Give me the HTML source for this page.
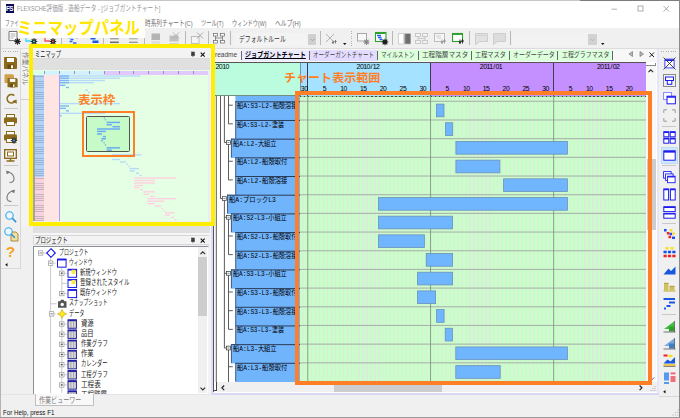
<!DOCTYPE html>
<html lang="ja"><head><meta charset="utf-8"><title>FLEXSCHE</title>
<style>
*{margin:0;padding:0;box-sizing:border-box}
html,body{width:680px;height:418px;overflow:hidden;background:#f0f0f0}
body{position:relative;font-family:"Liberation Sans","Noto Sans CJK JP",sans-serif;font-size:7.5px;color:#000;line-height:1}
.a{position:absolute}
.t{position:absolute;white-space:nowrap;line-height:1}
.g{font-family:"Liberation Mono","Noto Sans CJK JP",monospace}
svg{position:absolute;overflow:visible}
</style></head>
<body>
<div class="a" style="left:0px;top:0px;width:680px;height:28px;background:#fff;"></div>
<div class="a" style="left:0px;top:0px;width:580px;height:1px;background:#c6c6c6;"></div>
<div class="a" style="left:580px;top:0px;width:100px;height:1px;background:#7c7c7c;"></div>
<div class="a" style="left:0px;top:0px;width:1px;height:418px;background:#b4b4b4;"></div>
<div class="a" style="left:678.5px;top:0px;width:1.5px;height:418px;background:#8a8a8a;"></div>
<div class="a" style="left:0px;top:417.3px;width:680px;height:0.7px;background:#9a9a9a;"></div>
<div class="a" style="left:5.5px;top:4px;width:8px;height:8.5px;background:#0b0b5c;"></div>
<div class="t" style="left:6px;top:4.6px;font-size:8px;color:#fff;font-weight:bold;letter-spacing:-0.8px;transform-origin:0 0;transform:scaleX(0.78)">FS</div>
<div class="t" style="transform-origin:0 0;transform:scaleX(0.718);left:16.6px;top:5.1px;font-size:7.8px;color:#959595;">FLEXSCHE評価版 - 造船データ - [ジョブガントチャート]</div>
<svg style="left:605px;top:0" width="75" height="18" viewBox="0 0 75 18"><g fill="none" stroke="#9a9a9a" stroke-width="0.8"><path d="M6.5 9.2h5.5"/><rect x="33" y="6" width="5" height="5"/><path d="M58.5 6l5.5 5.5M64 6l-5.5 5.5"/></g></svg>
<div class="t" style="transform-origin:0 0;transform:scaleX(0.611);left:5px;top:19.9px;font-size:7.6px;color:#6c6c6c;">ファイル(F)</div>
<div class="t" style="transform-origin:0 0;transform:scaleX(0.748);left:145px;top:19.9px;font-size:7.6px;color:#6c6c6c;">時系列チャート(C)</div>
<div class="t" style="transform-origin:0 0;transform:scaleX(0.696);left:201.4px;top:19.9px;font-size:7.6px;color:#6c6c6c;">ツール(T)</div>
<div class="t" style="transform-origin:0 0;transform:scaleX(0.685);left:232.3px;top:19.9px;font-size:7.6px;color:#6c6c6c;">ウィンドウ(W)</div>
<div class="t" style="transform-origin:0 0;transform:scaleX(0.768);left:275px;top:19.9px;font-size:7.6px;color:#6c6c6c;">ヘルプ(H)</div>
<div class="a" style="left:1px;top:28px;width:678px;height:20px;background:#f0f0f0;"></div>
<div class="a" style="left:1px;top:48px;width:678px;height:1px;background:#dcdcdc;"></div>
<svg style="left:8px;top:31px" width="14" height="15" viewBox="0 0 14 15"><path d="M1 0.5h8v9h-8z" fill="#fff" stroke="#777" stroke-width="1"/><path d="M2.5 3h5M2.5 5h5M2.5 7h3" stroke="#999" stroke-width="0.8"/><circle cx="9.5" cy="10.5" r="1.984" fill="#222"/><g stroke="#222" stroke-width="1.1"><path d="M10.78 10.5L12.7 10.5"/><path d="M10.41 11.41L11.76 12.76"/><path d="M9.5 11.78L9.5 13.7"/><path d="M8.59 11.41L7.24 12.76"/><path d="M8.22 10.5L6.3 10.5"/><path d="M8.59 9.59L7.24 8.24"/><path d="M9.5 9.22L9.5 7.3"/><path d="M10.41 9.59L11.76 8.24"/></g></svg>
<svg style="left:24px;top:31px" width="14" height="15" viewBox="0 0 14 15"><path d="M2 4v6h5" fill="none" stroke="#35d7f0" stroke-width="1.3"/><circle cx="10" cy="10.5" r="1.984" fill="#222"/><g stroke="#222" stroke-width="1.1"><path d="M11.28 10.5L13.2 10.5"/><path d="M10.91 11.41L12.26 12.76"/><path d="M10 11.78L10 13.7"/><path d="M9.09 11.41L7.74 12.76"/><path d="M8.72 10.5L6.8 10.5"/><path d="M9.09 9.59L7.74 8.24"/><path d="M10 9.22L10 7.3"/><path d="M10.91 9.59L12.26 8.24"/></g><circle cx="10" cy="10.5" r="0.96" fill="#35d7f0"/></svg>
<svg style="left:43px;top:31px" width="14" height="15" viewBox="0 0 14 15"><path d="M2 4v6h5" fill="none" stroke="#f05060" stroke-width="1.3"/><circle cx="10" cy="10.5" r="1.984" fill="#222"/><g stroke="#222" stroke-width="1.1"><path d="M11.28 10.5L13.2 10.5"/><path d="M10.91 11.41L12.26 12.76"/><path d="M10 11.78L10 13.7"/><path d="M9.09 11.41L7.74 12.76"/><path d="M8.72 10.5L6.8 10.5"/><path d="M9.09 9.59L7.74 8.24"/><path d="M10 9.22L10 7.3"/><path d="M10.91 9.59L12.26 8.24"/></g><circle cx="10" cy="10.5" r="0.96" fill="#f05060"/></svg>
<div class="a" style="left:61px;top:36px;width:1px;height:9px;background:#b8b8b8;"></div>
<svg style="left:66.5px;top:36px" width="12" height="8" viewBox="0 0 12 8"><path d="M1 1.5h3M3.5 3.5h3M2.5 5.5h3M6 7h3.5" stroke="#2868f0" stroke-width="1.3"/><path d="M9.5 2h1.2" stroke="#f04040" stroke-width="1.2"/></svg>
<svg style="left:89px;top:36px" width="12" height="8" viewBox="0 0 12 8"><path d="M1.5 2.3h5M3.5 5.8h6" stroke="#1858e8" stroke-width="2.4"/><path d="M0.5 0.8h2" stroke="#1858e8" stroke-width="1"/></svg>
<div class="a" style="left:102.5px;top:36px;width:1px;height:9px;background:#b8b8b8;"></div>
<svg style="left:110.4px;top:37px" width="10" height="8" viewBox="0 0 10 8"><path d="M0 1.6h8.8" stroke="#a0a0a0" stroke-width="1.6"/><path d="M0 5.3h8.8" stroke="#6e6e6e" stroke-width="1.6"/></svg>
<svg style="left:129px;top:37px" width="10" height="8" viewBox="0 0 10 8"><path d="M0 1.6h8.8" stroke="#b8b8b8" stroke-width="1.6"/><path d="M0 5.3h8.8" stroke="#9a9a9a" stroke-width="1.4"/></svg>
<div class="a" style="left:143.5px;top:36px;width:1px;height:9px;background:#b8b8b8;"></div>
<svg style="left:151px;top:33px" width="10" height="12" viewBox="0 0 10 12"><rect x="0.5" y="0.5" width="8.5" height="6.5" fill="#b4b4b4"/><path d="M0.5 9h8.5M0.5 11h8.5" stroke="#c8c8c8" stroke-width="0.8"/></svg>
<svg style="left:169px;top:32px" width="12" height="13" viewBox="0 0 12 13"><rect x="0.5" y="3.5" width="9" height="6" fill="#c0c0c0"/><path d="M4 0.5l6 6M10 0.5l-6 6" stroke="#aaa" stroke-width="0.9" fill="none"/><path d="M0.5 11.5h9" stroke="#c8c8c8" stroke-width="0.8"/></svg>
<div class="a" style="left:185px;top:31px;width:1px;height:14px;background:#b8b8b8;"></div>
<svg style="left:191px;top:32px" width="13" height="13" viewBox="0 0 13 13"><rect x="0.5" y="4.5" width="7.5" height="7" fill="#f4f4f4" stroke="#b0b0b0" stroke-width="0.8"/><path d="M6 0.5l6 6M12 0.5l-6 6" stroke="#a0a0a0" stroke-width="0.9" fill="none"/></svg>
<div class="a" style="left:207.5px;top:31px;width:1px;height:14px;background:#b8b8b8;"></div>
<svg style="left:212.5px;top:33px" width="13" height="11" viewBox="0 0 13 11"><g fill="#fff" stroke="#666" stroke-width="0.7"><rect x="0.5" y="0.5" width="4" height="2.5"/><rect x="7.5" y="0.5" width="4" height="2.5"/><rect x="0.5" y="7.5" width="4" height="2.5"/><rect x="7.5" y="7.5" width="4" height="2.5"/></g><path d="M2.5 3v2h7v-2M2.5 7.5v-2.5M9.5 7.5v-2.5" fill="none" stroke="#666" stroke-width="0.7"/></svg>
<div class="a" style="left:229.5px;top:31px;width:1px;height:14px;background:#b8b8b8;"></div>
<div class="a" style="left:234px;top:33px;width:82px;height:13px;background:#f3f3f3;"></div>
<div class="t" style="transform-origin:0 0;transform:scaleX(0.750);left:238.6px;top:36px;font-size:7.8px;color:#333;">デフォルトルール</div>
<div class="a" style="left:308px;top:33.5px;width:7.5px;height:11.5px;background:#cfcfcf;"></div>
<svg style="left:309.5px;top:37.5px" width="5" height="4" viewBox="0 0 5 4"><path d="M0.5 0.8l2 2 2-2" fill="none" stroke="#9a9a9a" stroke-width="0.8"/></svg>
<div class="a" style="left:319.5px;top:31px;width:1px;height:14px;background:#b8b8b8;"></div>
<svg style="left:325px;top:33px" width="14" height="12" viewBox="0 0 14 12"><path d="M1 1l8 8M9 1c-2 2-5 5-8 8" fill="none" stroke="#a8a8a8" stroke-width="0.9"/><path d="M8 7.5v3M10.5 7.5v3M7 9l1 1.5 1-1.5M9.5 9l1-1.5 1 1.5" fill="none" stroke="#555" stroke-width="0.7"/></svg>
<svg style="left:343px;top:43px" width="4" height="3" viewBox="0 0 4 3"><path d="M0 0h3.5l-1.75 2z" fill="#111"/></svg>
<div class="a" style="left:351px;top:31px;width:1px;height:15px;background:repeating-linear-gradient(#b0b0b0 0 1px,transparent 1px 2.4px)"></div>
<svg style="left:357px;top:33px" width="14" height="13" viewBox="0 0 14 13"><rect x="0.5" y="0.5" width="9" height="7.5" fill="#f8f8f8" stroke="#a0a0a0" stroke-width="0.9"/><circle cx="9.5" cy="9" r="1.8599999999999999" fill="#8a8a8a"/><g stroke="#8a8a8a" stroke-width="1.1"><path d="M10.7 9L12.5 9"/><path d="M10.35 9.85L11.62 11.12"/><path d="M9.5 10.2L9.5 12"/><path d="M8.65 9.85L7.38 11.12"/><path d="M8.3 9L6.5 9"/><path d="M8.65 8.15L7.38 6.88"/><path d="M9.5 7.8L9.5 6"/><path d="M10.35 8.15L11.62 6.88"/></g></svg>
<svg style="left:375px;top:32px" width="14" height="14" viewBox="0 0 14 14"><rect x="0.5" y="0.5" width="10.5" height="9" fill="#fff" stroke="#2ea02e" stroke-width="1.1"/><path d="M1 1.2h9.5" stroke="#2ea02e" stroke-width="1.6"/><path d="M2 3.5h4M3 5.5h3.5M4.5 7.5h3" stroke="#2060f0" stroke-width="1.3"/><circle cx="10" cy="10" r="2.046" fill="#1a1a1a"/><g stroke="#1a1a1a" stroke-width="1.1"><path d="M11.32 10L13.3 10"/><path d="M10.93 10.93L12.33 12.33"/><path d="M10 11.32L10 13.3"/><path d="M9.07 10.93L7.67 12.33"/><path d="M8.68 10L6.7 10"/><path d="M9.07 9.07L7.67 7.67"/><path d="M10 8.68L10 6.7"/><path d="M10.93 9.07L12.33 7.67"/></g></svg>
<div class="a" style="left:392px;top:31px;width:1px;height:14px;background:#b8b8b8;"></div>
<svg style="left:398px;top:33px" width="13" height="12" viewBox="0 0 13 12"><rect x="0.5" y="0.5" width="12" height="10.5" fill="#fff" stroke="#c8c8c8" stroke-width="0.8"/><rect x="7" y="0.8" width="5.5" height="10" fill="#6e6e6e"/><rect x="5.5" y="0.8" width="1.8" height="10" fill="#b4b4b4"/></svg>
<svg style="left:415px;top:33px" width="13" height="12" viewBox="0 0 13 12"><g fill="#f4f4f4" stroke="#c4c4c4" stroke-width="0.9"><rect x="0.5" y="0.5" width="5" height="3"/><rect x="7.5" y="0.5" width="5" height="3"/><rect x="0.5" y="7.5" width="5" height="3"/><rect x="7.5" y="7.5" width="5" height="3"/></g><path d="M3 3.5v4M10 3.5v4M3 5.5h7" stroke="#c4c4c4" stroke-width="0.9" fill="none"/></svg>
<svg style="left:433.5px;top:33px" width="14" height="13" viewBox="0 0 14 13"><rect x="0.5" y="0.5" width="10" height="8" fill="#f6f6f6" stroke="#b8b8b8" stroke-width="0.9"/><path d="M2 3h5M3 5h4" stroke="#c8c8c8" stroke-width="0.9"/><path d="M8 6.5v4M10.5 6.5v4M7 8.5l1 2 1-2M9.5 8.5l1-2 1 2" fill="none" stroke="#8a8a8a" stroke-width="0.8"/></svg>
<svg style="left:452px;top:33px" width="14" height="13" viewBox="0 0 14 13"><rect x="0.5" y="0.5" width="10" height="8" fill="#fff" stroke="#2ea02e" stroke-width="1.1"/><path d="M1 1.2h9" stroke="#2ea02e" stroke-width="1.5"/><path d="M8 6.5v4M10.5 6.5v4M7 8.5l1 2 1-2M9.5 8.5l1-2 1 2" fill="none" stroke="#222" stroke-width="0.9"/></svg>
<div class="a" style="left:468.5px;top:31px;width:1px;height:14px;background:#b8b8b8;"></div>
<svg style="left:475px;top:33px" width="13" height="12" viewBox="0 0 13 12"><path d="M0.5 0.5h12v8h-8l-4 3z" fill="#e2e2e2" stroke="#c4c4c4" stroke-width="0.8"/><path d="M2 2.5h9" stroke="#cfcfcf" stroke-width="1"/></svg>
<svg style="left:493px;top:33px" width="13" height="12" viewBox="0 0 13 12"><path d="M0.5 0.5h12v8h-8l-4 3z" fill="#dcdcdc" stroke="#c8c8c8" stroke-width="0.8"/></svg>
<div class="a" style="left:510px;top:31px;width:1px;height:14px;background:#b8b8b8;"></div>
<div class="a" style="left:512px;top:33px;width:86px;height:13px;background:#f2f2f2;"></div>
<div class="a" style="left:588px;top:33.5px;width:9px;height:11.5px;background:#d2d2d2;"></div>
<svg style="left:590px;top:37.5px" width="5" height="4" viewBox="0 0 5 4"><path d="M0.5 0.8l2 2 2-2" fill="none" stroke="#b0b0b0" stroke-width="0.8"/></svg>
<svg style="left:600.5px;top:43px" width="4" height="3" viewBox="0 0 4 3"><path d="M0 0h3.5l-1.75 2z" fill="#111"/></svg>
<div class="a" style="left:1px;top:49px;width:20px;height:220px;background:#f0f0f0;"></div>
<div class="a" style="left:20px;top:49px;width:1px;height:220px;background:#d8d8d8;"></div>
<div class="a" style="left:21px;top:49px;width:8px;height:177px;background:#f3f3f3;"></div>
<div class="a" style="left:3px;top:51px;width:15px;height:1px;background:repeating-linear-gradient(90deg,#b0b0b0 0 1px,transparent 1px 2.4px)"></div>
<div class="t" style="left:28.8px;top:52.3px;font-size:7.4px;color:#7c7c7c;transform-origin:0 0;transform:rotate(90deg) scaleX(0.9)">作業パネル</div>
<div class="a" style="left:21px;top:99px;width:8px;height:0.8px;background:#d0d0d0;"></div>
<svg style="left:4px;top:57px" width="13" height="12" viewBox="0 0 13 12"><g transform="translate(0 0) scale(1)"><path d="M0 0.8q0-0.8 0.8-0.8h10.7l1.5 1.5v9.7q0 0.8-0.8 0.8h-11.4q-0.8 0-0.8-0.8z" fill="#8b6a1c"/><rect x="3" y="1" width="7" height="4" fill="#fff"/><rect x="3.5" y="7.5" width="6" height="4.5" fill="#6b4c0c"/><rect x="7" y="8.3" width="2" height="3" fill="#fff"/></g></svg>
<svg style="left:3.5px;top:74px" width="14" height="14" viewBox="0 0 14 14"><path d="M0.5 1q0-0.7 0.7-0.7h7.5l1.3 1.3v7.4h-9.5z" fill="#d0a050"/><g transform="translate(3.5 4) scale(0.78)"><path d="M0 0.8q0-0.8 0.8-0.8h10.7l1.5 1.5v9.7q0 0.8-0.8 0.8h-11.4q-0.8 0-0.8-0.8z" fill="#8b6a1c"/><rect x="3" y="1" width="7" height="4" fill="#fff"/><rect x="3.5" y="7.5" width="6" height="4.5" fill="#6b4c0c"/><rect x="7" y="8.3" width="2" height="3" fill="#fff"/></g></svg>
<svg style="left:4.5px;top:92.5px" width="12" height="12" viewBox="0 0 12 12"><path d="M9.3 2.6a4.3 4.3 0 1 0 1 5" fill="none" stroke="#8b6a1c" stroke-width="1.5"/><path d="M7 8.2l4.6-1.6 0.2 4.2z" fill="#8b6a1c"/></svg>
<div class="a" style="left:4px;top:108px;width:14px;height:1px;background:#c8c8c8;"></div>
<svg style="left:4px;top:113.8px" width="13" height="12" viewBox="0 0 13 12"><g transform="translate(0 0.5)"><rect x="2.5" y="0" width="8" height="3.5" fill="#fff" stroke="#8b6a1c" stroke-width="1"/><rect x="0" y="3" width="13" height="6" rx="1" fill="#8b6a1c"/><rect x="2.5" y="7" width="8" height="4" fill="#fff" stroke="#8b6a1c" stroke-width="1"/></g></svg>
<svg style="left:4px;top:131px" width="14" height="14" viewBox="0 0 14 14"><g transform="translate(0 0.5)"><rect x="2.5" y="0" width="8" height="3.5" fill="#fff" stroke="#8b6a1c" stroke-width="1"/><rect x="0" y="3" width="13" height="6" rx="1" fill="#8b6a1c"/><rect x="2.5" y="7" width="8" height="4" fill="#fff" stroke="#8b6a1c" stroke-width="1"/></g><circle cx="10" cy="9.5" r="1.984" fill="#333"/><g stroke="#333" stroke-width="1.1"><path d="M11.28 9.5L13.2 9.5"/><path d="M10.91 10.41L12.26 11.76"/><path d="M10 10.78L10 12.7"/><path d="M9.09 10.41L7.74 11.76"/><path d="M8.72 9.5L6.8 9.5"/><path d="M9.09 8.59L7.74 7.24"/><path d="M10 8.22L10 6.3"/><path d="M10.91 8.59L12.26 7.24"/></g><circle cx="10" cy="9.5" r="0.96" fill="#3aa0e0"/></svg>
<svg style="left:4px;top:148.5px" width="13" height="13" viewBox="0 0 13 13"><rect x="0.7" y="0.7" width="11.6" height="8.6" fill="#fff" stroke="#8b6a1c" stroke-width="1.4"/><rect x="3.5" y="3" width="6" height="4" fill="none" stroke="#8b6a1c" stroke-width="1"/><path d="M6.5 9.5v2M2.5 12h8" stroke="#8b6a1c" stroke-width="1.4"/></svg>
<div class="a" style="left:4px;top:165px;width:14px;height:1px;background:#c8c8c8;"></div>
<svg style="left:5px;top:170px" width="11" height="13" viewBox="0 0 11 13"><path d="M2.5 1.5q6 2 6.5 6.5t-4.5 4.5" fill="none" stroke="#777" stroke-width="1.1"/><path d="M1 0.5l0.8 3.8 3.4-2z" fill="#777"/></svg>
<svg style="left:5px;top:188.5px" width="11" height="13" viewBox="0 0 11 13"><path d="M8.5 1.5q-6 2-6.5 6.5t4.5 4.5" fill="none" stroke="#777" stroke-width="1.1"/><path d="M10 0.5l-0.8 3.8-3.4-2z" fill="#777"/></svg>
<div class="a" style="left:4px;top:204.5px;width:14px;height:1px;background:#c8c8c8;"></div>
<svg style="left:5px;top:211px" width="12" height="12" viewBox="0 0 12 12"><circle cx="4.5" cy="4.5" r="3.7" fill="#eef6ff" stroke="#30a8e8" stroke-width="1.1"/><path d="M7.3 7.3l3.8 3.8" stroke="#2890d8" stroke-width="1.6"/></svg>
<svg style="left:3.5px;top:227px" width="15" height="15" viewBox="0 0 15 15"><path d="M7 5h5l2 2v7h-7z" fill="#f0e0a0" stroke="#a08030" stroke-width="0.9"/><circle cx="4.5" cy="4.5" r="3.7" fill="#eef6ff" stroke="#30a8e8" stroke-width="1.1"/><path d="M7.3 7.3l3.5 3.5" stroke="#2890d8" stroke-width="1.6"/></svg>
<div class="t" style="left:5.8px;top:243.5px;font-size:15.5px;color:#f5a31c;font-weight:bold;font-family:'Liberation Sans',sans-serif">?</div>
<svg style="left:4.5px;top:262.5px" width="3" height="4" viewBox="0 0 3 4"><path d="M2.5 0v3.6l-2.3-1.8z" fill="#111"/></svg>
<div class="a" style="left:1px;top:268.3px;width:20px;height:1px;background:#d8d8d8;"></div>
<div class="a" style="left:33px;top:48px;width:177px;height:10.5px;background:#f3f3f3;border-bottom:1px solid #dadada"></div>
<div class="t" style="transform-origin:0 0;transform:scaleX(0.667);left:35px;top:50.5px;font-size:7.8px;color:#111;">ミニマップ</div>
<svg style="left:189.5px;top:51px" width="6" height="7" viewBox="0 0 6 7"><rect x="1.7" y="1" width="2.6" height="3" fill="#444" stroke="#222" stroke-width="0.5"/><path d="M1 4.3h4M2.9 4.3v1.6" stroke="#222" stroke-width="0.7"/></svg>
<svg style="left:199.5px;top:51.5px" width="6" height="6" viewBox="0 0 6 6"><path d="M0.7 0.7l4 4M4.7 0.7l-4 4" stroke="#111" stroke-width="1.1"/></svg>
<div class="a" style="left:33px;top:58.5px;width:177px;height:12.2px;background:#e0e0e0;"></div>
<div class="a" style="left:33px;top:70.3px;width:177px;height:150.7px;background:#e4ffe4;"></div>
<div class="a" style="left:33px;top:70.6px;width:11px;height:4.2px;background:#d6ffec;"></div>
<div class="a" style="left:44px;top:70.6px;width:59.5px;height:4.2px;background:#d4f1ff;"></div>
<div class="a" style="left:103.5px;top:70.6px;width:106.5px;height:4.2px;background:#e3c8ff;"></div>
<div class="a" style="left:44px;top:70.8px;width:0.8px;height:3.6px;background:#8c98a4;"></div>
<div class="a" style="left:58.9px;top:70.8px;width:0.8px;height:3.6px;background:#8c98a4;"></div>
<div class="a" style="left:73.8px;top:70.8px;width:0.8px;height:3.6px;background:#8c98a4;"></div>
<div class="a" style="left:88.7px;top:70.8px;width:0.8px;height:3.6px;background:#8c98a4;"></div>
<div class="a" style="left:103.6px;top:70.8px;width:0.8px;height:3.6px;background:#8c98a4;"></div>
<div class="a" style="left:118.5px;top:70.8px;width:0.8px;height:3.6px;background:#8c98a4;"></div>
<div class="a" style="left:133.4px;top:70.8px;width:0.8px;height:3.6px;background:#8c98a4;"></div>
<div class="a" style="left:148.3px;top:70.8px;width:0.8px;height:3.6px;background:#8c98a4;"></div>
<div class="a" style="left:163.2px;top:70.8px;width:0.8px;height:3.6px;background:#8c98a4;"></div>
<div class="a" style="left:178.1px;top:70.8px;width:0.8px;height:3.6px;background:#8c98a4;"></div>
<div class="a" style="left:193px;top:70.8px;width:0.8px;height:3.6px;background:#8c98a4;"></div>
<div class="a" style="left:207.9px;top:70.8px;width:0.8px;height:3.6px;background:#8c98a4;"></div>
<div class="a" style="left:33px;top:74.7px;width:11px;height:102px;background:repeating-linear-gradient(#b2d2f6 0 1.4px,#98b4d6 1.4px 2.2px)"></div>
<div class="a" style="left:33px;top:176.7px;width:11px;height:44.3px;background:repeating-linear-gradient(#f8d2de 0 1.4px,#c8b4bc 1.4px 2.2px)"></div>
<div class="a" style="left:33.4px;top:74.7px;width:1.8px;height:146.3px;background:#a0a4aa;"></div>
<div class="a" style="left:44px;top:74.7px;width:15.5px;height:146.3px;background:#ffe4e4;"></div>
<div class="a" style="left:59.3px;top:74.7px;width:0.9px;height:146.3px;background:#a8a0ff;"></div>
<div class="a" style="left:207.6px;top:70.6px;width:2.6px;height:150.4px;background:#ececf8;"></div>
<svg style="left:0;top:0" width="215" height="226" viewBox="0 0 215 226"><rect x="60" y="75.3" width="80.5" height="1.4" fill="#b8dafa"/><rect x="60" y="75.3" width="9" height="1.4" fill="#7cb6f4"/><rect x="60" y="77.5" width="60" height="1.4" fill="#b8dafa"/><rect x="60" y="77.5" width="9" height="1.4" fill="#7cb6f4"/><rect x="60" y="79.8" width="45" height="1.4" fill="#b8dafa"/><rect x="60" y="79.8" width="9" height="1.4" fill="#7cb6f4"/><rect x="60" y="82" width="34" height="1.4" fill="#b8dafa"/><rect x="60" y="82" width="9" height="1.4" fill="#7cb6f4"/><rect x="60" y="84.6" width="5.5" height="1.4" fill="#7cb6f4"/><rect x="66" y="86.8" width="3" height="1.4" fill="#7cb6f4"/><rect x="85" y="89.5" width="3" height="1.4" fill="#b8dafa"/><rect x="88" y="91.7" width="2" height="1.4" fill="#b8dafa"/><rect x="60" y="102.9" width="60" height="1.4" fill="#b8dafa"/><rect x="60" y="105.3" width="9" height="1.4" fill="#7cb6f4"/><rect x="60" y="107.7" width="6" height="1.4" fill="#7cb6f4"/><rect x="66" y="110.1" width="3" height="1.4" fill="#7cb6f4"/><rect x="60" y="112.6" width="45" height="1.4" fill="#b8dafa"/><rect x="60" y="115" width="1.5" height="1.4" fill="#7cb6f4"/><rect x="112" y="154.1" width="29.4" height="1.4" fill="#b8dafa"/><rect x="112" y="158.8" width="8" height="1.4" fill="#b8dafa"/><rect x="120" y="161.3" width="6" height="1.4" fill="#b8dafa"/><rect x="126.5" y="163.5" width="1.5" height="1.4" fill="#b8dafa"/><rect x="128.5" y="165.8" width="1.5" height="1.4" fill="#b8dafa"/><rect x="129.7" y="167.9" width="9.3" height="1.4" fill="#b8dafa"/><rect x="129.7" y="170.3" width="5.3" height="1.4" fill="#b8dafa"/><rect x="136" y="172.5" width="3" height="1.4" fill="#b8dafa"/><rect x="139.5" y="174.8" width="2" height="1.4" fill="#b8dafa"/><rect x="134.2" y="177.3" width="42.2" height="1.4" fill="#ffd0e0"/><rect x="134.2" y="179.8" width="20.8" height="1.4" fill="#ffd0e0"/><rect x="134.2" y="182.3" width="20.8" height="1.4" fill="#ffd0e0"/><rect x="134.2" y="184.8" width="8.8" height="1.4" fill="#ffd0e0"/><rect x="134.2" y="186.9" width="5.3" height="1.4" fill="#ffd0e0"/><rect x="140" y="188.9" width="3" height="1.4" fill="#ffd0e0"/><rect x="143.5" y="191.1" width="11.5" height="1.4" fill="#ffd0e0"/><rect x="143.5" y="193.5" width="5.5" height="1.4" fill="#ffd0e0"/><rect x="150" y="195.8" width="5" height="1.4" fill="#ffd0e0"/><rect x="147.3" y="198" width="29.1" height="1.4" fill="#ffd0e0"/><rect x="147.3" y="200.5" width="17.2" height="1.4" fill="#ffd0e0"/><rect x="147.3" y="203" width="7.7" height="1.4" fill="#ffd0e0"/><rect x="155" y="205.3" width="6" height="1.4" fill="#ffd0e0"/><rect x="161.5" y="207.6" width="1.5" height="1.4" fill="#ffd0e0"/><rect x="163.5" y="209.8" width="1.5" height="1.4" fill="#ffd0e0"/><rect x="165" y="212.1" width="9.5" height="1.4" fill="#ffd0e0"/><rect x="165" y="214.5" width="5" height="1.4" fill="#ffd0e0"/><rect x="171" y="216.8" width="3" height="1.4" fill="#ffd0e0"/><rect x="174.5" y="219" width="2" height="1.4" fill="#ffd0e0"/></svg>
<div class="a" style="left:82.2px;top:110.9px;width:52.7px;height:46.5px;border:2px solid #ff7f27"></div>
<div class="a" style="left:86.2px;top:115.8px;width:44.1px;height:36.3px;background:#c6fac6;border:1px solid #4c584c;border-radius:1.5px"></div>
<svg style="left:0;top:0" width="215" height="226" viewBox="0 0 215 226"><rect x="106.6" y="121.65" width="13.4" height="1.5" fill="#6aacf2"/><rect x="106.6" y="123.95" width="5.2" height="1.5" fill="#6aacf2"/><rect x="112.5" y="125.95" width="7.5" height="1.5" fill="#6aacf2"/><rect x="97.1" y="128.25" width="22.9" height="1.5" fill="#6aacf2"/><rect x="97.1" y="130.65" width="8.8" height="1.5" fill="#6aacf2"/><rect x="97.1" y="133.25" width="4.9" height="1.5" fill="#6aacf2"/><rect x="102.9" y="135.85" width="3" height="1.5" fill="#6aacf2"/><rect x="101.3" y="138.05" width="4.6" height="1.5" fill="#6aacf2"/><rect x="101.3" y="140.05" width="1.6" height="1.5" fill="#6aacf2"/><rect x="103.6" y="142.15" width="1" height="1.5" fill="#6aacf2"/><rect x="104.9" y="144.15" width="1" height="1.5" fill="#6aacf2"/><rect x="106.6" y="147.05" width="13.4" height="1.5" fill="#6aacf2"/><rect x="106.6" y="149.35" width="5.2" height="1.5" fill="#6aacf2"/><rect x="103.8" y="117.05" width="1" height="1.5" fill="#6aacf2"/><rect x="104.9" y="118.95" width="1" height="1.5" fill="#6aacf2"/></svg>
<div class="t" style="transform-origin:0 0;transform:scaleX(1.053);left:77.5px;top:94.7px;font-size:11.8px;color:#ff7f27;font-weight:bold">表示枠</div>
<div class="a" style="left:33px;top:226px;width:177px;height:6.5px;background:#e0e0e0;"></div>
<div class="a" style="left:33px;top:232.5px;width:177px;height:2.5px;background:#f6f6f6;"></div>
<div class="a" style="left:33px;top:234.8px;width:176px;height:10px;background:#f3f3f3;border:1px solid #d6d6d6;border-right:none;border-radius:1.5px 0 0 0"></div>
<div class="t" style="transform-origin:0 0;transform:scaleX(0.697);left:34.9px;top:236.7px;font-size:7.8px;color:#111;">プロジェクト</div>
<svg style="left:189.5px;top:237px" width="6" height="7" viewBox="0 0 6 7"><rect x="1.7" y="1" width="2.6" height="3" fill="#444" stroke="#222" stroke-width="0.5"/><path d="M1 4.3h4M2.9 4.3v1.6" stroke="#222" stroke-width="0.7"/></svg>
<svg style="left:199.5px;top:237.5px" width="6" height="6" viewBox="0 0 6 6"><path d="M0.7 0.7l4 4M4.7 0.7l-4 4" stroke="#111" stroke-width="1.1"/></svg>
<div class="a" style="left:33px;top:246px;width:176px;height:147.5px;background:#fff;border:1px solid #8c9098;border-bottom:none;border-right-color:#f4f4f4"></div>
<div class="a" style="left:198px;top:247px;width:9px;height:146px;background:#f0f0f0;"></div>
<div class="a" style="left:198.3px;top:257.3px;width:8.3px;height:58.3px;background:#cdcdcd;"></div>
<svg style="left:199.5px;top:250.5px" width="6" height="4" viewBox="0 0 6 4"><path d="M0.5 3.2l2.3-2.3 2.3 2.3" fill="none" stroke="#333" stroke-width="1.2"/></svg>
<svg style="left:199.5px;top:387px" width="6" height="4" viewBox="0 0 6 4"><path d="M0.5 0.6l2.3 2.3 2.3-2.3" fill="none" stroke="#333" stroke-width="1.2"/></svg>
<div class="a" style="left:34px;top:247px;width:164px;height:146.5px;overflow:hidden"><svg style="left:-34px;top:-247px" width="200" height="400" viewBox="0 0 200 400"><g stroke="#b4b4b4" stroke-width="0.7" fill="none"><path d="M43 253h4M50.6 257V393M50.6 263.15h5M50.6 303.75h6M50.6 313.9h5M61.8 267.15V293.6M61.8 273.3h5M61.8 283.45h5M61.8 293.6h5M61.8 317.9V393"/><path d="M61.8 324.05h5"/><path d="M61.8 334.2h5"/><path d="M61.8 344.35h5"/><path d="M61.8 354.5h5"/><path d="M61.8 364.65h5"/><path d="M61.8 374.8h5"/><path d="M61.8 384.95h5"/><path d="M61.8 395.1h5"/></g><rect x="38.4" y="250.8" width="4.4" height="4.4" fill="#fff" stroke="#9a9a9a" stroke-width="0.7"/><path d="M39.4 253h2.4" stroke="#445" stroke-width="0.7"/><rect x="48.4" y="260.95" width="4.4" height="4.4" fill="#fff" stroke="#9a9a9a" stroke-width="0.7"/><path d="M49.4 263.15h2.4" stroke="#445" stroke-width="0.7"/><rect x="59.599999999999994" y="271.1" width="4.4" height="4.4" fill="#fff" stroke="#9a9a9a" stroke-width="0.7"/><path d="M60.599999999999994 273.3h2.4" stroke="#445" stroke-width="0.7"/><path d="M61.8 272.1v2.4" stroke="#445" stroke-width="0.7"/><rect x="59.599999999999994" y="291.40000000000003" width="4.4" height="4.4" fill="#fff" stroke="#9a9a9a" stroke-width="0.7"/><path d="M60.599999999999994 293.6h2.4" stroke="#445" stroke-width="0.7"/><path d="M61.8 292.40000000000003v2.4" stroke="#445" stroke-width="0.7"/><rect x="49.4" y="311.7" width="4.4" height="4.4" fill="#fff" stroke="#9a9a9a" stroke-width="0.7"/><path d="M50.4 313.9h2.4" stroke="#445" stroke-width="0.7"/><rect x="59.599999999999994" y="321.85" width="4.4" height="4.4" fill="#fff" stroke="#9a9a9a" stroke-width="0.7"/><path d="M60.599999999999994 324.05h2.4" stroke="#445" stroke-width="0.7"/><path d="M61.8 322.85v2.4" stroke="#445" stroke-width="0.7"/><rect x="59.599999999999994" y="332" width="4.4" height="4.4" fill="#fff" stroke="#9a9a9a" stroke-width="0.7"/><path d="M60.599999999999994 334.2h2.4" stroke="#445" stroke-width="0.7"/><path d="M61.8 333v2.4" stroke="#445" stroke-width="0.7"/><rect x="59.599999999999994" y="342.15000000000003" width="4.4" height="4.4" fill="#fff" stroke="#9a9a9a" stroke-width="0.7"/><path d="M60.599999999999994 344.35h2.4" stroke="#445" stroke-width="0.7"/><path d="M61.8 343.15000000000003v2.4" stroke="#445" stroke-width="0.7"/><rect x="59.599999999999994" y="352.3" width="4.4" height="4.4" fill="#fff" stroke="#9a9a9a" stroke-width="0.7"/><path d="M60.599999999999994 354.5h2.4" stroke="#445" stroke-width="0.7"/><path d="M61.8 353.3v2.4" stroke="#445" stroke-width="0.7"/><rect x="59.599999999999994" y="362.45" width="4.4" height="4.4" fill="#fff" stroke="#9a9a9a" stroke-width="0.7"/><path d="M60.599999999999994 364.65h2.4" stroke="#445" stroke-width="0.7"/><path d="M61.8 363.45v2.4" stroke="#445" stroke-width="0.7"/><rect x="59.599999999999994" y="372.6" width="4.4" height="4.4" fill="#fff" stroke="#9a9a9a" stroke-width="0.7"/><path d="M60.599999999999994 374.8h2.4" stroke="#445" stroke-width="0.7"/><path d="M61.8 373.6v2.4" stroke="#445" stroke-width="0.7"/><rect x="59.599999999999994" y="382.75000000000006" width="4.4" height="4.4" fill="#fff" stroke="#9a9a9a" stroke-width="0.7"/><path d="M60.599999999999994 384.95000000000005h2.4" stroke="#445" stroke-width="0.7"/><path d="M61.8 383.75000000000006v2.4" stroke="#445" stroke-width="0.7"/><path d="M51 248.7l4.3 4.3-4.3 4.3-4.3-4.3z" fill="#fff" stroke="#1818f0" stroke-width="1.1"/><rect x="57.5" y="259.15" width="8.6" height="8" fill="#fff" stroke="#1818e8" stroke-width="1"/><path d="M57.5 259.65h8.6" stroke="#1818e8" stroke-width="1.6"/><rect x="68" y="269.3" width="8.6" height="8" fill="#fff" stroke="#1818e8" stroke-width="1"/><path d="M68 269.8h8.6" stroke="#1818e8" stroke-width="1.6"/><rect x="71.5" y="269.8" width="4" height="4" fill="#f8e840"/><rect x="68" y="279.45" width="8.6" height="8" fill="#fff" stroke="#1818e8" stroke-width="1"/><path d="M68 279.95h8.6" stroke="#1818e8" stroke-width="1.6"/><rect x="71.5" y="279.95" width="4" height="4" fill="#f8e840"/><rect x="68" y="289.6" width="8.6" height="8" fill="#fff" stroke="#1818e8" stroke-width="1"/><path d="M68 290.1h8.6" stroke="#1818e8" stroke-width="1.6"/><path d="M58 301.25h2l1-1.5h2.5l1 1.5h2v6.5h-8.5z" fill="#555"/><circle cx="62.2" cy="304.55" r="1.7" fill="#fff"/><path d="M62 309.4l1.5 3 3 1.5-3 1.5-1.5 3-1.5-3-3-1.5 3-1.5z" fill="#ffe820" stroke="#c0a000" stroke-width="0.6"/><rect x="68" y="319.85" width="8.4" height="8.4" fill="#d8d8d8" stroke="#2020a0" stroke-width="1"/><path d="M68 320.45h8.4" stroke="#2020a0" stroke-width="1.5"/><path d="M70.9 321.05v7M73.6 321.05v7" stroke="#888" stroke-width="0.6"/><rect x="68" y="330" width="8.4" height="8.4" fill="#d8d8d8" stroke="#2020a0" stroke-width="1"/><path d="M68 330.59999999999997h8.4" stroke="#2020a0" stroke-width="1.5"/><path d="M70.9 331.2v7M73.6 331.2v7" stroke="#888" stroke-width="0.6"/><rect x="68" y="340.15000000000003" width="8.4" height="8.4" fill="#d8d8d8" stroke="#2020a0" stroke-width="1"/><path d="M68 340.75h8.4" stroke="#2020a0" stroke-width="1.5"/><path d="M70.9 341.35v7M73.6 341.35v7" stroke="#888" stroke-width="0.6"/><rect x="68" y="350.3" width="8.4" height="8.4" fill="#d8d8d8" stroke="#2020a0" stroke-width="1"/><path d="M68 350.9h8.4" stroke="#2020a0" stroke-width="1.5"/><path d="M70.9 351.5v7M73.6 351.5v7" stroke="#888" stroke-width="0.6"/><rect x="68" y="360.45" width="8.4" height="8.4" fill="#d8d8d8" stroke="#2020a0" stroke-width="1"/><path d="M68 361.04999999999995h8.4" stroke="#2020a0" stroke-width="1.5"/><path d="M70.9 361.65v7M73.6 361.65v7" stroke="#888" stroke-width="0.6"/><rect x="68" y="370.6" width="8.4" height="8.4" fill="#d8d8d8" stroke="#2020a0" stroke-width="1"/><path d="M68 371.2h8.4" stroke="#2020a0" stroke-width="1.5"/><path d="M70.9 371.8v7M73.6 371.8v7" stroke="#888" stroke-width="0.6"/><rect x="68" y="380.75000000000006" width="8.4" height="8.4" fill="#d8d8d8" stroke="#2020a0" stroke-width="1"/><path d="M68 381.35h8.4" stroke="#2020a0" stroke-width="1.5"/><path d="M70.9 381.95000000000005v7M73.6 381.95000000000005v7" stroke="#888" stroke-width="0.6"/><rect x="68" y="390.90000000000003" width="8.4" height="8.4" fill="#d8d8d8" stroke="#2020a0" stroke-width="1"/><path d="M68 391.5h8.4" stroke="#2020a0" stroke-width="1.5"/><path d="M70.9 392.1v7M73.6 392.1v7" stroke="#888" stroke-width="0.6"/></svg><div class="t" style="transform-origin:0 0;transform:scaleX(0.647);left:24.5px;top:1.7px;font-size:7.6px;color:#222">プロジェクト</div><div class="t" style="transform-origin:0 0;transform:scaleX(0.619);left:35.3px;top:11.85px;font-size:7.6px;color:#222">ウィンドウ</div><div class="t" style="transform-origin:0 0;transform:scaleX(0.696);left:46px;top:22px;font-size:7.6px;color:#222">新規ウィンドウ</div><div class="t" style="transform-origin:0 0;transform:scaleX(0.723);left:46px;top:32.15px;font-size:7.6px;color:#222">登録されたスタイル</div><div class="t" style="transform-origin:0 0;transform:scaleX(0.696);left:46px;top:42.3px;font-size:7.6px;color:#222">既存ウィンドウ</div><div class="t" style="transform-origin:0 0;transform:scaleX(0.637);left:34.6px;top:52.45px;font-size:7.6px;color:#222">スナップショット</div><div class="t" style="transform-origin:0 0;transform:scaleX(0.676);left:34.6px;top:62.6px;font-size:7.6px;color:#222">データ</div><div class="t" style="transform-origin:0 0;transform:scaleX(0.836);left:46.5px;top:72.75px;font-size:7.6px;color:#222">資源</div><div class="t" style="transform-origin:0 0;transform:scaleX(0.836);left:46.5px;top:82.9px;font-size:7.6px;color:#222">品目</div><div class="t" style="transform-origin:0 0;transform:scaleX(0.706);left:46.5px;top:93.05px;font-size:7.6px;color:#222">作業グラフ</div><div class="t" style="transform-origin:0 0;transform:scaleX(0.836);left:46.5px;top:103.2px;font-size:7.6px;color:#222">作業</div><div class="t" style="transform-origin:0 0;transform:scaleX(0.698);left:46.5px;top:113.35px;font-size:7.6px;color:#222">カレンダー</div><div class="t" style="transform-origin:0 0;transform:scaleX(0.706);left:46.5px;top:123.5px;font-size:7.6px;color:#222">工程グラフ</div><div class="t" style="transform-origin:0 0;transform:scaleX(0.869);left:46.5px;top:133.65px;font-size:7.6px;color:#222">工程表</div><div class="t" style="transform-origin:0 0;transform:scaleX(0.856);left:46.5px;top:143.8px;font-size:7.6px;color:#222">工程階層</div></div>
<div class="a" style="left:1px;top:393.5px;width:210px;height:1px;background:#e4e4e4;"></div>
<div class="a" style="left:35px;top:394px;width:58.5px;height:12px;background:#f8f8f8;border:1px solid #c0c0c0;border-top:none"></div>
<div class="t" style="transform-origin:0 0;transform:scaleX(0.796);left:38.7px;top:396.9px;font-size:7.6px;color:#787878;">作業ビューワー</div>
<div class="t" style="transform-origin:0 0;transform:scaleX(0.840);left:2.8px;top:409.2px;font-size:7.4px;color:#111;">For Help, press F1</div>
<div class="a" style="left:215px;top:49px;width:444px;height:12.5px;background:#f7f7f7;"></div>
<div class="a" style="left:216px;top:50px;width:25.5px;height:11px;background:#f4f4f4;"></div>
<div class="t" style="transform-origin:0 0;transform:scaleX(0.878);left:214.6px;top:50.6px;font-size:7.4px;color:#444;">readme</div>
<div class="a" style="left:241.5px;top:50px;width:68px;height:11px;background:#ecebff;"></div>
<div class="t" style="transform-origin:0 0;transform:scaleX(0.823);left:245px;top:50.6px;font-size:7.4px;color:#000;font-weight:bold;text-decoration:underline;">ジョブガントチャート</div>
<div class="a" style="left:309.5px;top:50px;width:68px;height:11px;background:#e4dcff;"></div>
<div class="t" style="transform-origin:0 0;transform:scaleX(0.751);left:313px;top:50.6px;font-size:7.4px;color:#444;">オーダーガントチャート</div>
<div class="a" style="left:377.5px;top:50px;width:41px;height:11px;background:#dcffdc;"></div>
<div class="t" style="transform-origin:0 0;transform:scaleX(0.757);left:381px;top:50.6px;font-size:7.4px;color:#444;">マイルストン</div>
<div class="a" style="left:418.5px;top:50px;width:53px;height:11px;background:#dcffdc;"></div>
<div class="t" style="transform-origin:0 0;transform:scaleX(0.895);left:421.7px;top:50.6px;font-size:7.4px;color:#444;">工程階層マスタ</div>
<div class="a" style="left:471.5px;top:50px;width:38px;height:11px;background:#dcffdc;"></div>
<div class="t" style="transform-origin:0 0;transform:scaleX(0.833);left:475px;top:50.6px;font-size:7.4px;color:#444;">工程マスタ</div>
<div class="a" style="left:509.5px;top:50px;width:48.5px;height:11px;background:#dcffdc;"></div>
<div class="t" style="transform-origin:0 0;transform:scaleX(0.806);left:513px;top:50.6px;font-size:7.4px;color:#444;">オーダーデータ</div>
<div class="a" style="left:558px;top:50px;width:55px;height:11px;background:#dcffdc;"></div>
<div class="t" style="transform-origin:0 0;transform:scaleX(0.803);left:561.5px;top:50.6px;font-size:7.4px;color:#444;">工程グラフマスタ</div>
<div class="a" style="left:240.6px;top:50.5px;width:0.9px;height:9.5px;background:#666;"></div>
<div class="a" style="left:308.6px;top:50.5px;width:0.9px;height:9.5px;background:#666;"></div>
<div class="a" style="left:376.6px;top:50.5px;width:0.9px;height:9.5px;background:#666;"></div>
<div class="a" style="left:417.6px;top:50.5px;width:0.9px;height:9.5px;background:#666;"></div>
<div class="a" style="left:470.6px;top:50.5px;width:0.9px;height:9.5px;background:#666;"></div>
<div class="a" style="left:508.6px;top:50.5px;width:0.9px;height:9.5px;background:#666;"></div>
<div class="a" style="left:557.1px;top:50.5px;width:0.9px;height:9.5px;background:#666;"></div>
<div class="a" style="left:612.1px;top:50.5px;width:0.9px;height:9.5px;background:#666;"></div>
<svg style="left:628px;top:51px" width="6" height="6" viewBox="0 0 6 6"><path d="M4.5 0.5v5l-3.5-2.5z" fill="#bbb" stroke="#666" stroke-width="0.6"/></svg>
<svg style="left:638.5px;top:51px" width="6" height="6" viewBox="0 0 6 6"><path d="M1 0.5v5l3.5-2.5z" fill="#bbb" stroke="#666" stroke-width="0.6"/></svg>
<svg style="left:649px;top:51.5px" width="6" height="6" viewBox="0 0 6 6"><path d="M0.5 0.5l4.5 4.5M5 0.5l-4.5 4.5" stroke="#222" stroke-width="1"/></svg>
<div class="a" style="left:210px;top:49px;width:5px;height:346px;background:#f6f6fa;"></div>
<div class="a" style="left:210.5px;top:49px;width:2px;height:345.5px;background:#dcdcf8;"></div>
<div class="a" style="left:657px;top:49px;width:2px;height:345.5px;background:#e6e6fa;"></div>
<div class="a" style="left:210.5px;top:393px;width:448.5px;height:1.5px;background:#d8d8f4;"></div>
<div class="a" style="left:215px;top:61.5px;width:442px;height:331.5px;background:#fff;"></div>
<div class="a" style="left:215px;top:61.5px;width:431.3px;height:1px;background:#555;"></div>
<div class="a" style="left:213.2px;top:226px;width:1px;height:166px;background:#555;"></div>
<div class="a" style="left:215px;top:62.5px;width:85.5px;height:33px;background:#bafcdd;"></div>
<div class="a" style="left:215px;top:94.8px;width:85px;height:0.8px;background:#6f8f80;"></div>
<div class="a" style="left:300.5px;top:62.5px;width:7.3px;height:33px;background:#a4e2ff;"></div>
<div class="a" style="left:300.2px;top:62.5px;width:0.8px;height:33px;background:#6e98b0;"></div>
<div class="a" style="left:307.8px;top:62.5px;width:122.8px;height:33px;background:#a4e2ff;"></div>
<div class="a" style="left:430.6px;top:62.5px;width:215.7px;height:33px;background:#c490ff;"></div>
<div class="a" style="left:307.3px;top:62.5px;width:1px;height:33px;background:#3c3c50;"></div>
<div class="a" style="left:430.1px;top:62.5px;width:1px;height:33px;background:#3c3c50;"></div>
<div class="a" style="left:553.2px;top:62.5px;width:1px;height:33px;background:#3c3c50;"></div>
<div class="t" style="left:298.2px;top:86.2px;width:12px;text-align:center;font-size:6.8px;letter-spacing:-0.43px;color:#000">30</div>
<div class="t" style="left:318.46000000000004px;top:86.2px;width:12px;text-align:center;font-size:6.8px;letter-spacing:-0.43px;color:#000">5</div>
<div class="t" style="left:337.485px;top:86.2px;width:12px;text-align:center;font-size:6.8px;letter-spacing:-0.43px;color:#000">10</div>
<div class="t" style="left:357.31px;top:86.2px;width:12px;text-align:center;font-size:6.8px;letter-spacing:-0.43px;color:#000">15</div>
<div class="t" style="left:377.135px;top:86.2px;width:12px;text-align:center;font-size:6.8px;letter-spacing:-0.43px;color:#000">20</div>
<div class="t" style="left:396.96000000000004px;top:86.2px;width:12px;text-align:center;font-size:6.8px;letter-spacing:-0.43px;color:#000">25</div>
<div class="t" style="left:416.785px;top:86.2px;width:12px;text-align:center;font-size:6.8px;letter-spacing:-0.43px;color:#000">30</div>
<div class="t" style="left:441.26000000000005px;top:86.2px;width:12px;text-align:center;font-size:6.8px;letter-spacing:-0.43px;color:#000">5</div>
<div class="t" style="left:460.285px;top:86.2px;width:12px;text-align:center;font-size:6.8px;letter-spacing:-0.43px;color:#000">10</div>
<div class="t" style="left:480.11px;top:86.2px;width:12px;text-align:center;font-size:6.8px;letter-spacing:-0.43px;color:#000">15</div>
<div class="t" style="left:499.935px;top:86.2px;width:12px;text-align:center;font-size:6.8px;letter-spacing:-0.43px;color:#000">20</div>
<div class="t" style="left:519.76px;top:86.2px;width:12px;text-align:center;font-size:6.8px;letter-spacing:-0.43px;color:#000">25</div>
<div class="t" style="left:539.585px;top:86.2px;width:12px;text-align:center;font-size:6.8px;letter-spacing:-0.43px;color:#000">30</div>
<div class="t" style="left:564.36px;top:86.2px;width:12px;text-align:center;font-size:6.8px;letter-spacing:-0.43px;color:#000">5</div>
<div class="t" style="left:583.385px;top:86.2px;width:12px;text-align:center;font-size:6.8px;letter-spacing:-0.43px;color:#000">10</div>
<div class="t" style="left:603.21px;top:86.2px;width:12px;text-align:center;font-size:6.8px;letter-spacing:-0.43px;color:#000">15</div>
<div class="t" style="left:623.0350000000001px;top:86.2px;width:12px;text-align:center;font-size:6.8px;letter-spacing:-0.43px;color:#000">20</div>
<div class="t" style="left:215.5px;top:62.8px;font-size:7px;letter-spacing:-0.54px;color:#000">2010</div>
<div class="t" style="left:348px;top:62.8px;width:40px;text-align:center;font-size:7px;letter-spacing:-0.54px;color:#000">2010<span style="margin:0 0.9px 0 0.5px">/</span>12</div>
<div class="t" style="left:471px;top:62.8px;width:40px;text-align:center;font-size:7px;letter-spacing:-0.54px;color:#000">2011<span style="margin:0 0.9px 0 0.5px">/</span>01</div>
<div class="t" style="left:588.2px;top:62.8px;width:40px;text-align:center;font-size:7px;letter-spacing:-0.54px;color:#000">2011<span style="margin:0 0.9px 0 0.5px">/</span>02</div>
<div class="a" style="left:300px;top:95.5px;width:346.29999999999995px;height:286.7px;background-color:#c8ffc8;background-image:repeating-linear-gradient(90deg,#d8ecd8 0 1.2px,transparent 1.2px 3.965px);background-position:-1.16px 0"></div>
<div class="a" style="left:300px;top:95.5px;width:346.29999999999995px;height:1px;background:repeating-linear-gradient(90deg,#404850 0 1.5px,#90c8a0 1.5px 3.965px)"></div>
<svg style="left:0;top:0" width="680" height="418" viewBox="0 0 680 418"><rect x="300" y="100.75" width="346.3" height="1.1" fill="#a9b5a9"/><rect x="300" y="119.43" width="346.3" height="1.1" fill="#a9b5a9"/><rect x="300" y="138.11" width="346.3" height="1.1" fill="#a9b5a9"/><rect x="300" y="156.79" width="346.3" height="1.1" fill="#a9b5a9"/><rect x="300" y="175.47" width="346.3" height="1.1" fill="#a9b5a9"/><rect x="300" y="194.15" width="346.3" height="1.1" fill="#a9b5a9"/><rect x="300" y="212.83" width="346.3" height="1.1" fill="#a9b5a9"/><rect x="300" y="231.51" width="346.3" height="1.1" fill="#a9b5a9"/><rect x="300" y="250.19" width="346.3" height="1.1" fill="#a9b5a9"/><rect x="300" y="268.87" width="346.3" height="1.1" fill="#a9b5a9"/><rect x="300" y="287.55" width="346.3" height="1.1" fill="#a9b5a9"/><rect x="300" y="306.23" width="346.3" height="1.1" fill="#a9b5a9"/><rect x="300" y="324.91" width="346.3" height="1.1" fill="#a9b5a9"/><rect x="300" y="343.59" width="346.3" height="1.1" fill="#a9b5a9"/><rect x="300" y="362.27" width="346.3" height="1.1" fill="#a9b5a9"/><rect x="300" y="380.95" width="346.3" height="1.1" fill="#a9b5a9"/><rect x="307.35" y="95.5" width="0.9" height="286.7" fill="#86928a"/><rect x="430.15" y="95.5" width="0.9" height="286.7" fill="#86928a"/><rect x="553.25" y="95.5" width="0.9" height="286.7" fill="#86928a"/><rect x="436.5" y="104.1" width="7.5" height="12.7" fill="#70b6ff" stroke="#6c90bc" stroke-width="0.8"/><rect x="445.4" y="122.78" width="7.3" height="12.7" fill="#70b6ff" stroke="#6c90bc" stroke-width="0.8"/><rect x="455.9" y="141.46" width="111.5" height="12.7" fill="#70b6ff" stroke="#6c90bc" stroke-width="0.8"/><rect x="455.9" y="160.14" width="44" height="12.7" fill="#70b6ff" stroke="#6c90bc" stroke-width="0.8"/><rect x="503.6" y="178.82" width="63.8" height="12.7" fill="#70b6ff" stroke="#6c90bc" stroke-width="0.8"/><rect x="378.4" y="197.5" width="189" height="12.7" fill="#70b6ff" stroke="#6c90bc" stroke-width="0.8"/><rect x="378.4" y="216.18" width="74.2" height="12.7" fill="#70b6ff" stroke="#6c90bc" stroke-width="0.8"/><rect x="378.4" y="234.86" width="46" height="12.7" fill="#70b6ff" stroke="#6c90bc" stroke-width="0.8"/><rect x="426.2" y="253.54" width="26.4" height="12.7" fill="#70b6ff" stroke="#6c90bc" stroke-width="0.8"/><rect x="417.6" y="272.22" width="35" height="12.7" fill="#70b6ff" stroke="#6c90bc" stroke-width="0.8"/><rect x="417.6" y="290.9" width="18" height="12.7" fill="#70b6ff" stroke="#6c90bc" stroke-width="0.8"/><rect x="436.6" y="309.58" width="7.5" height="12.7" fill="#70b6ff" stroke="#6c90bc" stroke-width="0.8"/><rect x="445.2" y="328.26" width="7.2" height="12.7" fill="#70b6ff" stroke="#6c90bc" stroke-width="0.8"/><rect x="455.8" y="346.94" width="111.6" height="12.7" fill="#70b6ff" stroke="#6c90bc" stroke-width="0.8"/><rect x="455.8" y="365.62" width="44.4" height="12.7" fill="#70b6ff" stroke="#6c90bc" stroke-width="0.8"/></svg>
<div class="a" style="left:215px;top:95.5px;width:85px;height:286.7px;overflow:hidden">
<svg style="left:0;top:0" width="85" height="286.7" viewBox="0 0 85 286.7"><rect x="20.4" y="0" width="65" height="6.8" fill="#70b4fc"/><rect x="20.4" y="5.3" width="64.6" height="19.28" fill="#70b4fc"/><rect x="20.4" y="23.98" width="64.6" height="19.28" fill="#70b4fc"/><rect x="16" y="42.66" width="69" height="19.28" fill="#70b4fc"/><rect x="20.4" y="61.34" width="64.6" height="19.28" fill="#70b4fc"/><rect x="20.4" y="80.02" width="64.6" height="19.28" fill="#70b4fc"/><rect x="12.2" y="98.7" width="72.8" height="19.28" fill="#70b4fc"/><rect x="16" y="117.38" width="69" height="19.28" fill="#70b4fc"/><rect x="20.4" y="136.06" width="64.6" height="19.28" fill="#70b4fc"/><rect x="20.4" y="154.74" width="64.6" height="19.28" fill="#70b4fc"/><rect x="16" y="173.42" width="69" height="19.28" fill="#70b4fc"/><rect x="20.4" y="192.1" width="64.6" height="19.28" fill="#70b4fc"/><rect x="20.4" y="210.78" width="64.6" height="19.28" fill="#70b4fc"/><rect x="20.4" y="229.46" width="64.6" height="19.28" fill="#70b4fc"/><rect x="16" y="248.14" width="69" height="19.28" fill="#70b4fc"/><rect x="20.4" y="266.82" width="64.6" height="19.28" fill="#70b4fc"/><rect x="20.4" y="5.3" width="64.6" height="1" fill="#2c3c58"/><rect x="20.3" y="5.3" width="0.9" height="18.68" fill="#3c5474"/><rect x="20.4" y="23.98" width="64.6" height="1" fill="#2c3c58"/><rect x="20.3" y="23.98" width="0.9" height="18.68" fill="#3c5474"/><rect x="16" y="42.66" width="69" height="1" fill="#2c3c58"/><rect x="15.9" y="42.66" width="0.9" height="18.68" fill="#3c5474"/><rect x="20.4" y="61.34" width="64.6" height="1" fill="#2c3c58"/><rect x="20.3" y="61.34" width="0.9" height="18.68" fill="#3c5474"/><rect x="20.4" y="80.02" width="64.6" height="1" fill="#2c3c58"/><rect x="20.3" y="80.02" width="0.9" height="18.68" fill="#3c5474"/><rect x="12.2" y="98.7" width="72.8" height="1" fill="#2c3c58"/><rect x="12.1" y="98.7" width="0.9" height="18.68" fill="#3c5474"/><rect x="16" y="117.38" width="69" height="1" fill="#2c3c58"/><rect x="15.9" y="117.38" width="0.9" height="18.68" fill="#3c5474"/><rect x="20.4" y="136.06" width="64.6" height="1" fill="#2c3c58"/><rect x="20.3" y="136.06" width="0.9" height="18.68" fill="#3c5474"/><rect x="20.4" y="154.74" width="64.6" height="1" fill="#2c3c58"/><rect x="20.3" y="154.74" width="0.9" height="18.68" fill="#3c5474"/><rect x="16" y="173.42" width="69" height="1" fill="#2c3c58"/><rect x="15.9" y="173.42" width="0.9" height="18.68" fill="#3c5474"/><rect x="20.4" y="192.1" width="64.6" height="1" fill="#2c3c58"/><rect x="20.3" y="192.1" width="0.9" height="18.68" fill="#3c5474"/><rect x="20.4" y="210.78" width="64.6" height="1" fill="#2c3c58"/><rect x="20.3" y="210.78" width="0.9" height="18.68" fill="#3c5474"/><rect x="20.4" y="229.46" width="64.6" height="1" fill="#2c3c58"/><rect x="20.3" y="229.46" width="0.9" height="18.68" fill="#3c5474"/><rect x="16" y="248.14" width="69" height="1" fill="#2c3c58"/><rect x="15.9" y="248.14" width="0.9" height="18.68" fill="#3c5474"/><rect x="20.4" y="266.82" width="64.6" height="1" fill="#2c3c58"/><rect x="20.3" y="266.82" width="0.9" height="18.68" fill="#3c5474"/></svg>
<div class="t g" style="transform-origin:0 0;transform:scaleX(0.843);left:22.3px;top:7.8px;font-size:7.3px;color:#000">船A:S3-L2-船殻溶接</div>
<div class="t g" style="transform-origin:0 0;transform:scaleX(0.824);left:22.3px;top:26.48px;font-size:7.3px;color:#000">船A:S3-L2-塗装</div>
<div class="t g" style="transform-origin:0 0;transform:scaleX(0.853);left:17.9px;top:45.16px;font-size:7.3px;color:#000">船A:L2-大組立</div>
<div class="t g" style="transform-origin:0 0;transform:scaleX(0.860);left:22.3px;top:63.84px;font-size:7.3px;color:#000">船A:L2-船殻取付</div>
<div class="t g" style="transform-origin:0 0;transform:scaleX(0.860);left:22.3px;top:82.52px;font-size:7.3px;color:#000">船A:L2-船殻溶接</div>
<div class="t g" style="transform-origin:0 0;transform:scaleX(0.869);left:14.1px;top:101.2px;font-size:7.3px;color:#000">船A:ブロックL3</div>
<div class="t g" style="transform-origin:0 0;transform:scaleX(0.835);left:17.9px;top:119.88px;font-size:7.3px;color:#000">船A:S2-L3-小組立</div>
<div class="t g" style="transform-origin:0 0;transform:scaleX(0.843);left:22.3px;top:138.56px;font-size:7.3px;color:#000">船A:S2-L3-船殻取付</div>
<div class="t g" style="transform-origin:0 0;transform:scaleX(0.843);left:22.3px;top:157.24px;font-size:7.3px;color:#000">船A:S2-L3-船殻溶接</div>
<div class="t g" style="transform-origin:0 0;transform:scaleX(0.835);left:17.9px;top:175.92px;font-size:7.3px;color:#000">船A:S3-L3-小組立</div>
<div class="t g" style="transform-origin:0 0;transform:scaleX(0.843);left:22.3px;top:194.6px;font-size:7.3px;color:#000">船A:S3-L3-船殻取付</div>
<div class="t g" style="transform-origin:0 0;transform:scaleX(0.843);left:22.3px;top:213.28px;font-size:7.3px;color:#000">船A:S3-L3-船殻溶接</div>
<div class="t g" style="transform-origin:0 0;transform:scaleX(0.824);left:22.3px;top:231.96px;font-size:7.3px;color:#000">船A:S3-L3-塗装</div>
<div class="t g" style="transform-origin:0 0;transform:scaleX(0.853);left:17.9px;top:250.64px;font-size:7.3px;color:#000">船A:L3-大組立</div>
<div class="t g" style="transform-origin:0 0;transform:scaleX(0.860);left:22.3px;top:269.32px;font-size:7.3px;color:#000">船A:L3-船殻取付</div>
<svg style="left:0;top:0" width="85" height="286.7" viewBox="0 0 85 286.7"><g stroke="#4a4a4a" stroke-width="0.9" fill="none"><path d="M1.3 0V286.7"/><path d="M5.5 0V102.6H7.5"/><path d="M9.4 0V46.56H11.6"/><path d="M9.4 104.5V252.04H11.6M9.4 121.28H11.6M9.4 177.32H11.6"/><path d="M13.5 0V27.88"/><path d="M13.5 9.2h4.3"/><path d="M13.5 27.88h4.3"/><path d="M13.5 48.46V83.92"/><path d="M13.5 65.24h4.3"/><path d="M13.5 83.92h4.3"/><path d="M13.5 123.18V158.64"/><path d="M13.5 139.96h4.3"/><path d="M13.5 158.64h4.3"/><path d="M13.5 179.22V233.36"/><path d="M13.5 196h4.3"/><path d="M13.5 214.68h4.3"/><path d="M13.5 233.36h4.3"/><path d="M13.5 253.94V286.7"/><path d="M13.5 270.72h4.3"/></g><rect x="11.6" y="44.66" width="3.8" height="3.8" fill="#fff" stroke="#333" stroke-width="0.7"/><path d="M12.5 46.56h2" stroke="#333" stroke-width="0.6"/><rect x="11.6" y="119.38" width="3.8" height="3.8" fill="#fff" stroke="#333" stroke-width="0.7"/><path d="M12.5 121.28h2" stroke="#333" stroke-width="0.6"/><rect x="11.6" y="175.42" width="3.8" height="3.8" fill="#fff" stroke="#333" stroke-width="0.7"/><path d="M12.5 177.32h2" stroke="#333" stroke-width="0.6"/><rect x="11.6" y="250.14" width="3.8" height="3.8" fill="#fff" stroke="#333" stroke-width="0.7"/><path d="M12.5 252.04h2" stroke="#333" stroke-width="0.6"/><rect x="7.5" y="100.7" width="3.8" height="3.8" fill="#fff" stroke="#333" stroke-width="0.7"/><path d="M8.4 102.6h2" stroke="#333" stroke-width="0.6"/></svg>
</div>
<div class="a" style="left:646.3px;top:62.5px;width:10.2px;height:320px;background:#f8f8f8;"></div>
<div class="a" style="left:646.3px;top:62.5px;width:9.5px;height:3.3px;background:#fff;border:1px solid #888;border-top:none;border-left:none"></div>
<svg style="left:648.3px;top:69.3px" width="6" height="4" viewBox="0 0 6 4"><path d="M0.5 3.2l2.3-2.3 2.3 2.3" fill="none" stroke="#333" stroke-width="1.2"/></svg>
<div class="a" style="left:647px;top:159px;width:9px;height:71px;background:#cdcdcd;"></div>
<svg style="left:649px;top:376.5px" width="6" height="4" viewBox="0 0 6 4"><path d="M0.5 0.6l2.3 2.3 2.3-2.3" fill="none" stroke="#444" stroke-width="0.9"/></svg>
<div class="a" style="left:217px;top:382.2px;width:430px;height:10.3px;background:#f0f0f0;"></div>
<div class="a" style="left:214px;top:382.2px;width:3px;height:9.3px;background:#fff;border-right:1px solid #444;border-bottom:1px solid #444"></div>
<div class="a" style="left:333.7px;top:383px;width:108px;height:9px;background:#cdcdcd;"></div>
<svg style="left:220.5px;top:384.5px" width="4" height="6" viewBox="0 0 4 6"><path d="M3.2 0.5l-2.3 2.3 2.3 2.3" fill="none" stroke="#222" stroke-width="1.2"/></svg>
<svg style="left:638.5px;top:384.5px" width="4" height="6" viewBox="0 0 4 6"><path d="M0.6 0.5l2.3 2.3-2.3 2.3" fill="none" stroke="#222" stroke-width="1.2"/></svg>
<div class="a" style="left:647px;top:382.2px;width:10px;height:10.3px;background:#f0f0f0;"></div>
<svg style="left:649px;top:385px" width="7" height="7" viewBox="0 0 7 7"><path d="M6 1.5v0.01M6 3.5v0.01M4 3.5v0.01M6 5.5v0.01M4 5.5v0.01M2 5.5v0.01" stroke="#b0b0b0" stroke-width="1" stroke-linecap="square"/></svg>
<div class="a" style="left:28.8px;top:43.5px;width:186.2px;height:182.5px;border:4.7px solid #ffee00"></div>
<div class="a" style="left:17.5px;top:17px;width:127.5px;height:21.2px;background:#fffffa;"></div>
<div class="t" style="transform-origin:0 0;transform:scaleX(0.904);left:16.9px;top:19.7px;font-size:17px;color:#ffe600;font-weight:bold">ミニマップパネル</div>
<div class="a" style="left:295px;top:90.6px;width:357.2px;height:294px;border:4.3px solid #ff7f27"></div>
<div class="t" style="transform-origin:0 0;transform:scaleX(1.023);left:283.6px;top:72.5px;font-size:11.8px;color:#ff7f27;font-weight:bold">チャート表示範囲</div>
<div class="a" style="left:659px;top:49px;width:20px;height:347px;background:#f0f0f0;"></div>
<div class="a" style="left:659px;top:396px;width:20px;height:1px;background:#d8d8d8;"></div>
<div class="a" style="left:661px;top:51px;width:16px;height:1px;background:repeating-linear-gradient(90deg,#b0b0b0 0 1px,transparent 1px 2.4px)"></div>
<svg style="left:662.5px;top:56.7px" width="13" height="13" viewBox="0 0 13 13"><rect x="1.8" y="2.2" width="9.4" height="8.6" rx="1" fill="#fff" stroke="#6a6aff" stroke-width="1.3"/><path d="M2.2 3.2h8.6" stroke="#1c1cf0" stroke-width="1.6"/><path d="M0.5 0.5l12 12M12.5 0.5l-12 12" stroke="#333" stroke-width="0.9"/></svg>
<svg style="left:662.5px;top:73.9px" width="13" height="13" viewBox="0 0 13 13"><rect x="0.5" y="0.5" width="12" height="12" fill="#f4f4f4" stroke="#8a8a8a" stroke-width="1"/><rect x="2.5" y="3" width="8" height="3.5" fill="#fff" stroke="#1c1cf0" stroke-width="1"/><rect x="4.3" y="6.5" width="4.5" height="3.8" fill="#fff" stroke="#1c1cf0" stroke-width="1"/></svg>
<svg style="left:662.5px;top:92.1px" width="13" height="13" viewBox="0 0 13 13"><rect x="0.6" y="0.6" width="8" height="7" fill="#fff" stroke="#7a7aff" stroke-width="0.9"/><rect x="4" y="4.2" width="8.4" height="7.6" fill="#fff" stroke="#1c1cf0" stroke-width="1"/><path d="M4 5h8.4" stroke="#1c1cf0" stroke-width="1.5"/></svg>
<svg style="left:662.5px;top:108.9px" width="13" height="13" viewBox="0 0 13 13"><path d="M0.8 4v-3.2h3.2M9 0.8h3.2v3.2M12.2 9v3.2h-3.2M4 12.2h-3.2v-3.2" fill="none" stroke="#9a9a9a" stroke-width="1"/></svg>
<div class="a" style="left:662px;top:126px;width:14px;height:1px;background:#c8c8c8;"></div>
<svg style="left:662.5px;top:131.3px" width="13" height="13" viewBox="0 0 13 13"><g fill="#fff" stroke="#1c1cf0" stroke-width="1"><rect x="0.8" y="0.8" width="5" height="5"/><rect x="7.2" y="0.8" width="5" height="5"/><rect x="0.8" y="7.2" width="5" height="5"/><rect x="7.2" y="7.2" width="5" height="5"/></g><path d="M0.8 1.3h5M7.2 1.3h5M0.8 7.7h5M7.2 7.7h5" stroke="#1c1cf0" stroke-width="1.4"/></svg>
<div class="a" style="left:660.5px;top:147px;width:17px;height:17px;background:#cfe6fb;border:1px solid #bcdcf8"></div>
<svg style="left:662.5px;top:148.9px" width="13" height="13" viewBox="0 0 13 13"><rect x="0.8" y="1.8" width="11.4" height="9.4" fill="#fff" stroke="#1c1cf0" stroke-width="1"/><path d="M0.8 2.8h11.4" stroke="#1c1cf0" stroke-width="1.7"/></svg>
<div class="a" style="left:662px;top:165.4px;width:14px;height:1px;background:#c8c8c8;"></div>
<svg style="left:662.5px;top:170.5px" width="13" height="13" viewBox="0 0 13 13"><g fill="#fff" stroke="#1c1cf0" stroke-width="0.9"><rect x="0.6" y="0.6" width="7.5" height="6.5"/><rect x="2.6" y="2.9" width="7.5" height="6.5"/><rect x="4.6" y="5.2" width="7.5" height="6.5"/></g><path d="M4.6 5.8h7.5" stroke="#1c1cf0" stroke-width="1.3"/></svg>
<svg style="left:662.5px;top:188.1px" width="13" height="13" viewBox="0 0 13 13"><g fill="#fff" stroke="#1c1cf0" stroke-width="1"><rect x="0.8" y="1" width="4.8" height="11"/><rect x="7.4" y="1" width="4.8" height="11"/></g><path d="M0.8 1.5h4.8M7.4 1.5h4.8" stroke="#1c1cf0" stroke-width="1.4"/></svg>
<svg style="left:662.5px;top:206.2px" width="13" height="13" viewBox="0 0 13 13"><g fill="#fff" stroke="#1c1cf0" stroke-width="1"><rect x="0.8" y="0.8" width="11.4" height="4.8"/><rect x="0.8" y="7.4" width="11.4" height="4.8"/></g><path d="M0.8 1.3h11.4M0.8 7.9h11.4" stroke="#1c1cf0" stroke-width="1.4"/></svg>
<div class="a" style="left:662px;top:222.7px;width:14px;height:1px;background:#c8c8c8;"></div>
<svg style="left:662.5px;top:227.5px" width="13" height="13" viewBox="0 0 13 13"><g stroke-width="2.5"><path d="M1 2.2h2.6M6.5 6h2.6" stroke="#1850f0"/><path d="M6.8 2.2h2.6M9.5 5.6h2.4" stroke="#f8e020"/><path d="M3.8 5.2h2.6M5.5 9h2.6" stroke="#f02020"/><path d="M9 9.8h3" stroke="#1850f0"/></g></svg>
<svg style="left:662.5px;top:246.4px" width="13" height="13" viewBox="0 0 13 13"><g stroke-width="2.5"><path d="M2.5 2.2h3M7.5 2.2h3" stroke="#f8e020"/><path d="M0.5 6h3.2M4.9 6h3.2M9.3 6h3.2" stroke="#1850f0"/><path d="M0.5 10h3.2M4.9 10h3.2M9.3 10h3.2" stroke="#f02020"/></g></svg>
<svg style="left:662.5px;top:262.7px" width="13" height="13" viewBox="0 0 13 13"><path d="M0.5 11.5l5-6 2.5 2.5 4.5-4.5v8z" fill="#1858e0"/></svg>
<svg style="left:662.5px;top:279.5px" width="13" height="13" viewBox="0 0 13 13"><path d="M1 3h4.5v7.5h-4.5zM6.5 6h5v4.5h-5z" fill="#cfc060"/><path d="M1 3.3h4.5M6.5 6.3h5" stroke="#a89838" stroke-width="0.8"/><path d="M0.5 11h12" stroke="#c8b850" stroke-width="1.2"/></svg>
<svg style="left:662.5px;top:297.3px" width="13" height="13" viewBox="0 0 13 13"><path d="M0.5 2h11.5M6 5.5h6M3.5 9h4M1 11.5h2" stroke="#1858e8" stroke-width="2"/></svg>
<div class="a" style="left:662px;top:314px;width:14px;height:1px;background:#c8c8c8;"></div>
<svg style="left:662.5px;top:319.7px" width="13" height="13" viewBox="0 0 13 13"><path d="M1 9l10-7.5v7.5z" fill="#40c040"/><rect x="6" y="6.5" width="5.5" height="5" fill="#30a030"/><path d="M0.5 12h12M11.5 1v11" stroke="#555" stroke-width="0.8"/></svg>
<svg style="left:662.5px;top:337.2px" width="13" height="13" viewBox="0 0 13 13"><path d="M1 9l10-7.5v7.5z" fill="#78a8e0"/><rect x="6" y="6.5" width="5.5" height="5" fill="#4080c0"/><path d="M0.5 12h12M11.5 1v11" stroke="#555" stroke-width="0.8"/></svg>
<svg style="left:662.5px;top:354.4px" width="13" height="13" viewBox="0 0 13 13"><path d="M0.5 1.5h4" stroke="#f02020" stroke-width="2"/><path d="M5.5 2h4" stroke="#f8e020" stroke-width="2.4"/><path d="M0.5 9.5l4-4 3 2 4.5-4.5v6.5z" fill="#1858e0"/><path d="M0.5 11h12" stroke="#e8c040" stroke-width="1.8"/><path d="M0.5 12.5h12" stroke="#555" stroke-width="0.7"/></svg>
<svg style="left:662.5px;top:371.8px" width="13" height="13" viewBox="0 0 13 13"><rect x="1" y="0.5" width="5" height="8" fill="#5898f0"/><rect x="1" y="10" width="5" height="2" fill="#5898f0"/><rect x="7.5" y="0.5" width="5" height="1.8" fill="#f06070"/><rect x="7.5" y="4" width="5" height="6" fill="#f07080"/></svg>
<svg style="left:663px;top:389.5px" width="3" height="4" viewBox="0 0 3 4"><path d="M2.5 0v3.6l-2.3-1.8z" fill="#111"/></svg>
<svg style="left:671px;top:409px" width="8" height="8" viewBox="0 0 8 8"><path d="M7 1v0.01M7 3.5v0.01M4.5 3.5v0.01M7 6v0.01M4.5 6v0.01M2 6v0.01" stroke="#b8b8b8" stroke-width="1.2" stroke-linecap="square"/></svg>
</body></html>
